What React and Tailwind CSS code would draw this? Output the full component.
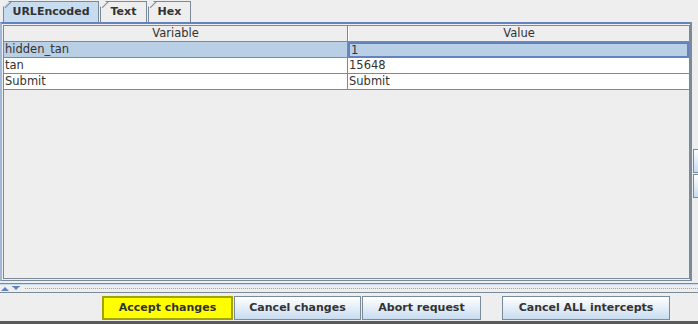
const rows = [
  { name: "hidden_tan", value: "1", selected: true },
  { name: "tan", value: "15648" },
  { name: "Submit", value: "Submit" },
];

function Tab({ label, active, className = "" }) {
  return (
    <div
      className={
        "relative flex h-[21px] items-center justify-center border border-b-0 border-[#7a8a99] text-[11px] font-bold text-[#333333] [clip-path:polygon(6px_0,100%_0,100%_100%,0_100%,0_6px)] " +
        (active ? "bg-[#c8dcf0] " : "bg-[#eeeeee] ") +
        className
      }
    >
      <span className="absolute left-[-1px] top-[-1px] h-[9px] w-[9px] border-r border-[#7a8a99] [transform:rotate(45deg)_translate(-4px,-1px)]" />
      {label}
    </div>
  );
}

function Button({ children, yellow, className = "" }) {
  return (
    <button
      className={
        "h-[24px] text-[11px] font-bold text-[#333333] border " +
        (yellow
          ? "bg-[#ffff00] border-2 border-[#a3a300] "
          : "border-[#7a8a99] bg-gradient-to-b from-white to-[#c8dcf0] ") +
        className
      }
    >
      {children}
    </button>
  );
}

export default function App() {
  return (
    <div className="w-[698px] h-[324px] bg-[#eeeeee] flex flex-col overflow-hidden font-['DejaVu_Sans',sans-serif] text-[#333333]">
      <div className="flex h-[22px] items-end gap-[1px] pl-[3px] pt-[1px]">
        <Tab label="URLEncoded" active className="w-[96px]" />
        <Tab label="Text" className="w-[47px]" />
        <Tab label="Hex" className="w-[43px]" />
      </div>
      <div className="flex h-[259px]">
        <div className="flex-1 flex flex-col border-t-2 border-t-[#6382bf] border-l-2 border-l-[#a3b8d8] border-b border-b-[#7a8a99]">
          <div className="m-[1px] mr-0 flex-1 border border-[#7a8a99] bg-[#eeeeee]">
            <div className="flex h-[16px] border-b border-[#7a8a99] text-[11.5px] leading-[15px]">
              <div className="w-[344px] border-r border-[#7a8a99] text-center">Variable</div>
              <div className="flex-1 border-l border-white text-center">Value</div>
            </div>
            {rows.map((r) => (
              <div
                key={r.name}
                className={
                  "flex h-[16px] border-b border-[#7a8a99] text-[11.5px] leading-[15px] " +
                  (r.selected ? "bg-[#b8cfe5]" : "bg-white")
                }
              >
                <div className="w-[344px] border-r border-[#7a8a99] pl-[1px]">{r.name}</div>
                <div
                  className={
                    "flex-1 pl-[1px] " +
                    (r.selected ? "border-2 border-[#6382bf] leading-[12px] -mb-[1px]" : "")
                  }
                >
                  {r.value}
                </div>
              </div>
            ))}
          </div>
        </div>
        <div className="w-[8px] flex flex-col pt-[127px] border-l-2 border-l-[#7a8a99] pl-[1px]">
          <div className="h-[24px] border border-r-0 border-[#7a8a99] bg-gradient-to-b from-white to-[#c8dcf0]" />
          <div className="h-[24px] mt-[1px] border border-r-0 border-[#7a8a99] bg-gradient-to-b from-white to-[#c8dcf0]" />
        </div>
      </div>
      <div className="h-[12px] flex flex-col">
        <div className="h-[2px] mt-[2px] border-t border-[#7a8a99] bg-[#c8dcf0]" />
        <div className="flex items-center h-[6px] gap-[3px] pl-[1px]">
          <svg width="8" height="5" viewBox="0 0 8 5">
            <path d="M0 5 L4 1 L8 5 Z" fill="#6382bf" />
          </svg>
          <svg width="8" height="5" viewBox="0 0 8 5">
            <path d="M0 0 L8 0 L8 1 L0 1 Z M1 1 L7 1 L4 4 Z" fill="#6382bf" />
          </svg>
          <div className="flex-1 ml-[2px] h-[1px] border-t border-dotted border-[#8ea3c8]" />
        </div>
        <div className="h-[1px] mt-[1px] bg-[#7a8a99]" />
      </div>
      <div className="flex items-start h-[28px] pt-[3px]">
        <Button yellow className="ml-[102px] w-[131px]">Accept changes</Button>
        <Button className="ml-[1px] w-[127px]">Cancel changes</Button>
        <Button className="ml-[1px] w-[119px]">Abort request</Button>
        <Button className="ml-[21px] w-[168px]">Cancel ALL intercepts</Button>
      </div>
      <div className="flex-1 bg-[#5a5a5a]" />
    </div>
  );
}
